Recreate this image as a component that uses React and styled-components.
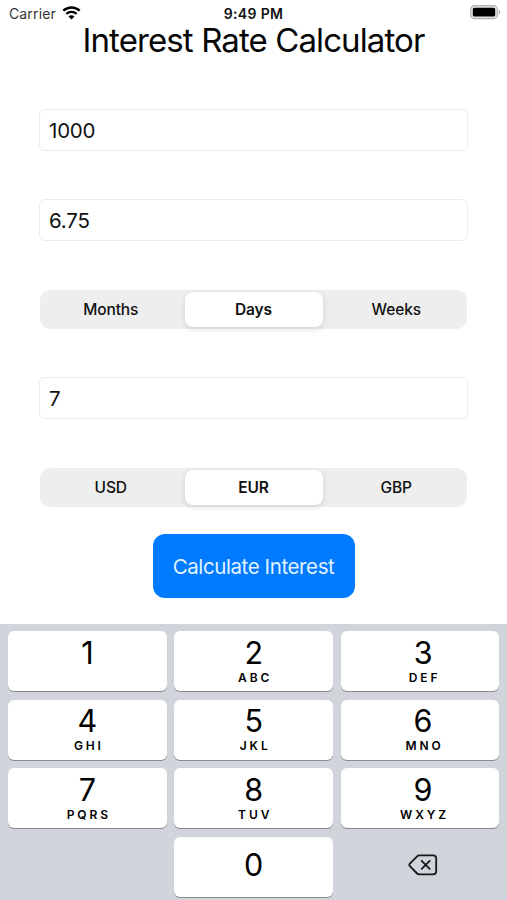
import React, { useState } from "react";
import styled, { createGlobalStyle } from "styled-components";

const GlobalStyle = createGlobalStyle`
  * {
    box-sizing: border-box;
  }
  body {
    margin: 0;
    background: #fff;
    font-family: Inter, "Liberation Sans", sans-serif;
    color: #111;
  }
  button, input {
    font-family: inherit;
    color: inherit;
  }
`;

const Screen = styled.div`
  width: 507px;
  height: 900px;
  display: flex;
  flex-direction: column;
  overflow: hidden;
`;

const StatusBar = styled.header`
  height: 26px;
  flex-shrink: 0;
  padding: 1px 6px 0 9px;
  display: grid;
  grid-template-columns: 1fr auto 1fr;
  align-items: center;
  font-size: 14px;
  line-height: 25px;
  .carrier {
    display: flex;
    align-items: center;
    gap: 6px;
    color: #333;
    letter-spacing: 0.14px;
  }
  .carrier svg {
    margin-bottom: 2px;
  }
  .time {
    margin-right: 3px;
    font-weight: 600;
    letter-spacing: 0.35px;
  }
  .battery {
    display: flex;
    justify-content: flex-end;
    padding-bottom: 2px;
  }
`;

const Title = styled.h1`
  height: 28px;
  margin: 0 0 55px;
  font-size: 33px;
  font-weight: 400;
  line-height: 28px;
  letter-spacing: -0.9px;
  text-align: center;
  white-space: nowrap;
  color: #050505;
`;

const Form = styled.main`
  flex: 1;
  display: flex;
  flex-direction: column;
  padding: 0 39px;
`;

const Field = styled.input`
  width: 429px;
  height: 42px;
  margin-bottom: ${(props) => props.$space}px;
  padding: 1px 9px 0;
  border: 1px solid #ececec;
  border-radius: 6px;
  outline: none;
  background: #fff;
  font-size: 20.5px;
  letter-spacing: -0.2px;
`;

const Segments = styled.div`
  width: 427px;
  height: 39px;
  margin: 0 1px ${(props) => props.$space}px;
  padding: 2px 0;
  display: grid;
  grid-template-columns: 1fr 138px 1fr;
  gap: 3px;
  border-radius: 10px;
  background: #eeeeef;
`;

const Segment = styled.button`
  height: 35px;
  padding: 0;
  border: none;
  border-radius: 8px;
  font-size: 15.5px;
  letter-spacing: -0.1px;
  font-weight: ${(props) => (props.$active ? 600 : 500)};
  background: ${(props) => (props.$active ? "#fff" : "transparent")};
  box-shadow: ${(props) =>
    props.$active ? "0 2px 6px rgba(0, 0, 0, 0.13)" : "none"};
`;

const CalculateButton = styled.button`
  align-self: center;
  width: 202px;
  height: 64px;
  padding: 1px 0 0;
  border: none;
  border-radius: 12px;
  background: #007aff;
  color: #e2f3ff;
  font-size: 20.5px;
  letter-spacing: -0.4px;
  white-space: nowrap;
`;

const Keyboard = styled.section`
  height: 276px;
  flex-shrink: 0;
  padding: 7px 7.5px 0 8px;
  display: grid;
  grid-template-columns: repeat(3, 1fr);
  grid-auto-rows: 60px;
  gap: 8.5px 7.5px;
  background: #d1d4db;
`;

const Key = styled.button`
  padding: ${(props) => (props.$centered ? "0 0 4px" : "4.5px 0 0")};
  border: none;
  border-radius: 6px;
  display: flex;
  flex-direction: column;
  align-items: center;
  justify-content: ${(props) => (props.$centered ? "center" : "flex-start")};
  background: ${(props) => (props.$plain ? "transparent" : "#fff")};
  box-shadow: ${(props) => (props.$plain ? "none" : "0 1px 0 #898a8d")};
  color: #000;
  &:nth-child(3n) {
    padding-left: 6px;
  }
  .digit {
    font-size: 30.5px;
    line-height: 34px;
  }
  .letters {
    padding-left: 2.9px;
    font-size: 12px;
    line-height: 15px;
    font-weight: 600;
    letter-spacing: 2.9px;
  }
`;

const WifiIcon = () => (
  <svg width="19" height="14" viewBox="0 0 19 14" fill="none">
    <path d="M1.3 4.7C6 0.4 13 0.4 17.7 4.7" stroke="#000" strokeWidth="2.4" />
    <path d="M4.3 7.9C7.3 5.2 11.7 5.2 14.7 7.9" stroke="#000" strokeWidth="2.2" />
    <path d="M6.5 10.5C8.2 8.9 10.8 8.9 12.5 10.5L9.5 13.5Z" fill="#000" />
  </svg>
);

const BatteryIcon = () => (
  <svg width="31" height="15" viewBox="0 0 31 15">
    <rect x="0.7" y="0.7" width="26.6" height="13" rx="3.8" fill="#e4e4e4" stroke="#b2b2b2" strokeWidth="1.2" />
    <rect x="2.8" y="2.8" width="22.4" height="8.8" rx="1.6" fill="#000" />
    <path d="M28.8 4.7C30.7 5.5 30.7 8.9 28.8 9.7Z" fill="#aaa" />
  </svg>
);

const DeleteIcon = () => (
  <svg width="30" height="22" viewBox="0 0 30 22" fill="none" stroke="#16181b" strokeWidth="1.8" strokeLinecap="round" strokeLinejoin="round">
    <path d="M11.2 1.4H25a3.2 3.2 0 0 1 3.2 3.2v12.6a3.2 3.2 0 0 1-3.2 3.2H11.2a3 3 0 0 1-2.1-.9L1.9 12.2a1.8 1.8 0 0 1 0-2.5L9.1 2.3a3 3 0 0 1 2.1-.9Z" />
    <path d="M13.7 6.9l8 8M21.7 6.9l-8 8" />
  </svg>
);

const keys = [
  { digit: "1", letters: "" },
  { digit: "2", letters: "ABC" },
  { digit: "3", letters: "DEF" },
  { digit: "4", letters: "GHI" },
  { digit: "5", letters: "JKL" },
  { digit: "6", letters: "MNO" },
  { digit: "7", letters: "PQRS" },
  { digit: "8", letters: "TUV" },
  { digit: "9", letters: "WXYZ" },
];

const SegmentedControl = ({ options, value, onChange, space }) => (
  <Segments $space={space}>
    {options.map((option) => (
      <Segment
        key={option}
        $active={option === value}
        onClick={() => onChange(option)}
      >
        {option}
      </Segment>
    ))}
  </Segments>
);

const App = () => {
  const [amount, setAmount] = useState("1000");
  const [rate, setRate] = useState("6.75");
  const [period, setPeriod] = useState("Days");
  const [length, setLength] = useState("7");
  const [currency, setCurrency] = useState("EUR");

  return (
    <Screen>
      <GlobalStyle />
      <StatusBar>
        <div className="carrier">
          Carrier
          <WifiIcon />
        </div>
        <div className="time">9:49 PM</div>
        <div className="battery">
          <BatteryIcon />
        </div>
      </StatusBar>
      <Title>Interest Rate Calculator</Title>
      <Form>
        <Field $space={48} value={amount} onChange={(e) => setAmount(e.target.value)} />
        <Field $space={49} value={rate} onChange={(e) => setRate(e.target.value)} />
        <SegmentedControl
          options={["Months", "Days", "Weeks"]}
          value={period}
          onChange={setPeriod}
          space={48}
        />
        <Field $space={48.5} value={length} onChange={(e) => setLength(e.target.value)} />
        <SegmentedControl
          options={["USD", "EUR", "GBP"]}
          value={currency}
          onChange={setCurrency}
          space={27.5}
        />
        <CalculateButton>Calculate Interest</CalculateButton>
      </Form>
      <Keyboard>
        {keys.map(({ digit, letters }) => (
          <Key key={digit} onClick={() => setLength(length + digit)}>
            <span className="digit">{digit}</span>
            <span className="letters">{letters}</span>
          </Key>
        ))}
        <span></span>
        <Key $centered onClick={() => setLength(length + "0")}>
          <span className="digit">0</span>
        </Key>
        <Key $plain $centered onClick={() => setLength(length.slice(0, -1))}>
          <DeleteIcon />
        </Key>
      </Keyboard>
    </Screen>
  );
};

export default App;
